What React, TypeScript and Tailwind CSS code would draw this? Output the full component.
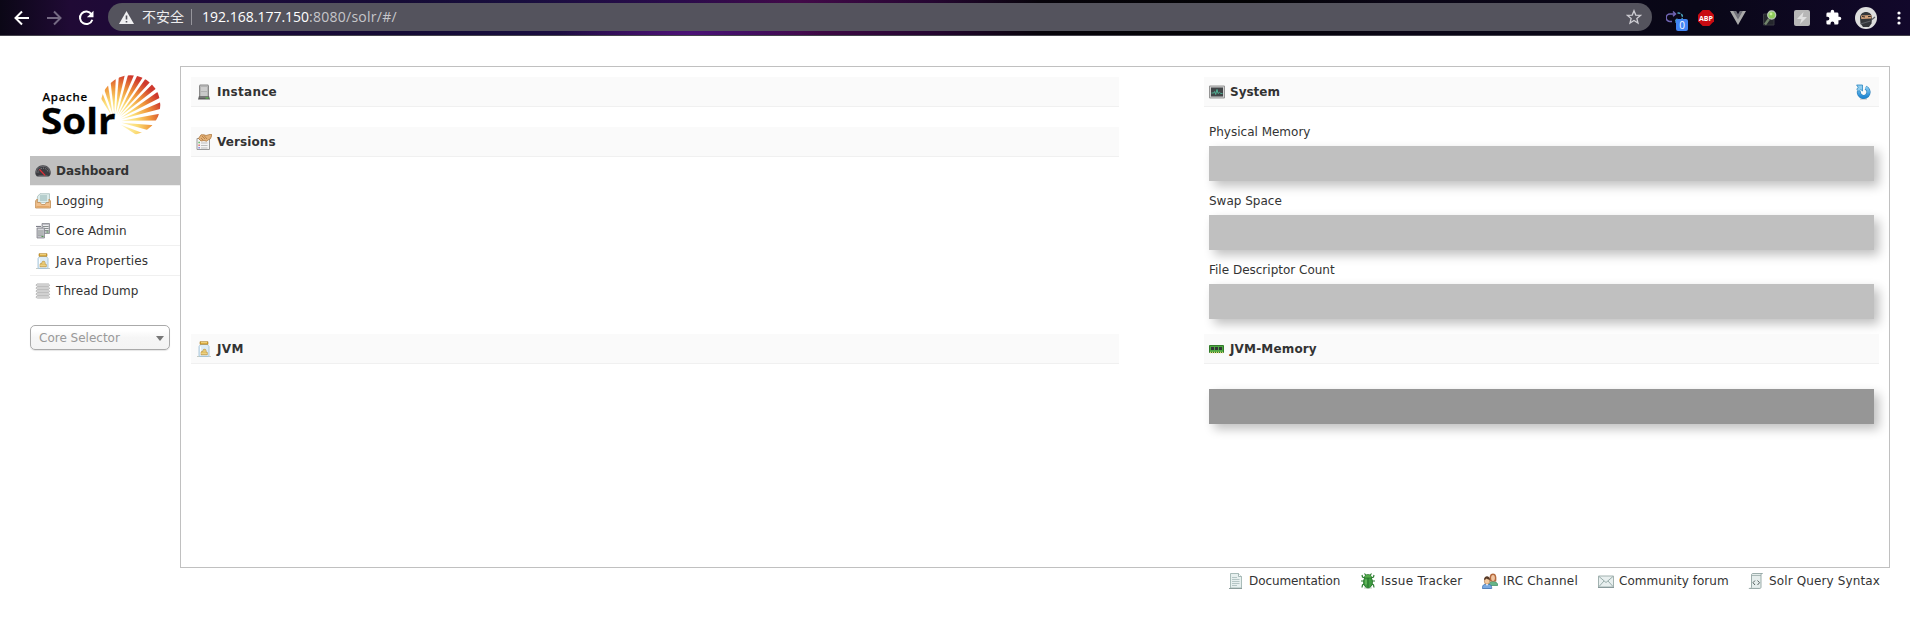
import React from "react";

type IconProps = { className?: string };

const svg16 = (children: React.ReactNode, className = "") => (
  <svg viewBox="0 0 16 16" className={"size-4 shrink-0 " + className}>{children}</svg>
);

/* ---------- page icons ---------- */

const ServerIcon = () => svg16(
  <>
    <path d="M3 1.5 4 .5h8l1 1v11H3z" fill="#8a8a8a" />
    <path d="M4.3 1.5h7.4v11H4.3z" fill="#c9c9c9" />
    <path d="M5 3h6M5 5h6M5 7h6" stroke="#9c9c9c" />
    <path d="M5 4h6M5 6h6" stroke="#e9e9e9" />
    <path d="M2 15.5 3 12h10l1 3.5z" fill="#5d5d5d" />
    <path d="M3.5 13h9" stroke="#929292" />
    <path d="M9.5 14h3" stroke="#4fd03f" />
  </>
);

const VersionsIcon = () => svg16(
  <>
    <path d="M1 4.5h12.5v11H1z" fill="#f4f4f4" stroke="#9a9a9a" />
    <path d="M5 9h6.500M5 11.500h6.500M5 14h6.500" stroke="#bdbdbd" />
    <path d="M2.500 8.500h1.200" stroke="#39a939" strokeWidth="1.400" />
    <path d="M2.500 11.200h1.200" stroke="#d94545" strokeWidth="1.400" />
    <path d="M2.500 13.700h1.200" stroke="#6565d8" strokeWidth="1.400" />
    <path d="M2.500 4.500 5 .8h3l2 .7L14 .4l2 .3-1.500 4L12 6l-1.500 1.200L8 6.500 5 7z" fill="#e3b178" stroke="#a77034" strokeWidth=".7" />
    <path d="m6 2 3 3M8 1.500 11 5M5 4l2 2" stroke="#9c642c" strokeWidth=".6" />
  </>
);

const DashboardIcon = () => svg16(
  <>
    <path d="M.3 10C.3 5.500 3.600 2.300 8 2.300s7.700 3.200 7.700 7.700c0 1.600-1 3.500-2.500 3.500H2.800C1.300 13.500.3 11.600.3 10z" fill="#3d3d42" />
    <path d="M1.300 9.600C1.300 5.800 4.200 3.300 8 3.300s6.700 2.500 6.700 6.300" fill="none" stroke="#77777c" strokeWidth=".8" />
    <path d="M3 9.500a5 4.300 0 0 1 10 0" fill="none" stroke="#a7a7aa" strokeWidth=".9" strokeDasharray="1 1.400" />
    <path d="M3.500 12.500h9" stroke="#5b5b60" />
    <path d="m4.500 6.500 5.700 6" stroke="#e02f38" strokeWidth="1.100" />
  </>
);

const LoggingIcon = () => svg16(
  <>
    <path d="M2.500 3.500 5 .7h9.500v9H2z" fill="#dcebea" stroke="#9db5b3" strokeWidth=".7" />
    <path d="M5 3h7M5 5h7M5 7h7" stroke="#7fa5a5" strokeWidth=".8" />
    <path d="M.6 7.800 2.300 6v3.500h2.900L6.500 11.500h3.600l1.200-2H14V6l1.500 2v7H.6z" fill="#f0c08c" stroke="#bf8d55" strokeWidth=".8" />
    <path d="M1.500 13.700h13" stroke="#e2a566" strokeWidth="1.300" />
  </>
);

const CoreAdminIcon = () => svg16(
  <>
    {[[7, .5], [2, 5]].map(([x, y]) => (
      <g key={x}>
        <path d={`M${x} ${y}h7.500v10h-7.500z`} fill="#c0c1c7" stroke="#85868e" strokeWidth=".8" />
        <path d={`M${x + 1} ${y + 2}h5.500m-5.500 2h5.500m-5.500 2h5.500`} stroke="#ededf0" />
        <path d={`M${x + 1} ${y + 3}h5.500m-5.500 2h5.500m-5.500 2h5.500`} stroke="#7b8480" strokeWidth=".8" />
        <path d={`M${x + 4.5} ${y + 8.5}h2`} stroke="#529851" />
      </g>
    ))}
    <path d="M1 3.500h5" fill="none" stroke="#80818b" strokeWidth="1.200" />
  </>
);

const JarIcon = () => svg16(
  <>
    <path d="M1 15.500h14" stroke="#c5cbc3" />
    <path d="M4.500 3.500 3 5.500v9c0 .7.400 1 1 1h8c.6 0 1-.3 1-1v-9l-1.500-2z" fill="#dcecf7" stroke="#9dbed3" strokeWidth=".8" />
    <path d="M4 .7h8v2.600H4z" fill="#d8a637" stroke="#ad7c21" strokeWidth=".6" />
    <path d="M5 1.700h6" stroke="#f3db8c" />
    <path d="M4.600 5.500v8" stroke="#fff" />
    <path d="M5 13.800v-2.600c0-1 2-1 2-.8V9c0-1 3-1 3 0v2c.6-.2 1.300 0 1.300.6v2.200z" fill="#e1bd5f" stroke="#b78e3b" strokeWidth=".6" />
    <path d="M7 10h3M5 12.300h6" stroke="#f4e1a0" strokeWidth=".7" />
  </>
);

const ThreadIcon = () => svg16(
  <>
    {[1, 4, 7, 10, 13].map((y) => (
      <path key={y} d={`M2 ${y}h11.500c1.300.8 1.300 2 0 2h-11c-1.500 0-1.800-1.200-.5-2z`} fill="#f6f6f6" stroke="#9a9a9a" strokeWidth=".8" />
    ))}
  </>
);

const SystemIcon = () => svg16(
  <>
    <path d="M.5 2h15v12H.5z" fill="#d0d0d0" stroke="#959595" />
    <path d="M2 3.500h12v9H2z" fill="#414547" />
    <path d="M2.500 9h2.200l1-1.500 1 3L8 5.500l1 4 1.500-1.200 1.300 1.200h1.700" fill="none" stroke="#53c8a5" strokeWidth=".8" />
  </>
);

const MemoryIcon = () => svg16(
  <>
    <path d="M.5 4.500h14v7H.5z" fill="#4fa843" stroke="#327c2a" />
    <path d="M2 6h3v3H2zM6 6h3v3H6zM10 6h3v3h-3z" fill="#333638" />
    <path d="M1 11.500h13.500" stroke="#d9d477" strokeWidth="1.500" strokeDasharray="1 1" />
  </>
);

const ReloadIcon = () => (
  <svg viewBox="0 0 16 16" className="size-4 shrink-0">
    <defs>
      <linearGradient id="reload" x1="0" y1="0" x2="0" y2="1">
        <stop offset="0" stopColor="#82c9f1" />
        <stop offset="1" stopColor="#2087d4" />
      </linearGradient>
    </defs>
    <path d="M4 15h7" stroke="#c6c6c6" strokeWidth="1.300" />
    <path d="M3 7A4.800 4.800 0 1 0 9.500 3.700" fill="none" stroke="#2c7fb9" strokeWidth="4.200" />
    <path d="M3 7A4.800 4.800 0 1 0 9.500 3.700" fill="none" stroke="url(#reload)" strokeWidth="3" />
    <path d="M.6 1H6.500v6L4.700 5.500 3 7.500.8 5.200 2.200 3.300z" fill="#8fcdf0" stroke="#2c86bf" strokeWidth=".8" />
  </svg>
);

const DocIcon = () => svg16(
  <>
    <path d="M2.500.5h8l3 3V15h-11z" fill="#e7f0ef" stroke="#a9bcb9" />
    <path d="M10.500.5v3h3" fill="#fff" stroke="#8fa6a3" strokeWidth=".8" />
    <path d="M4 4.500h5M4 6.500h7.500M4 8.500h7.500M4 10.500h7.500M4 12.500h5" stroke="#afc1bf" strokeWidth=".9" />
    <path d="M1 15.500h13" stroke="#8c9d9b" />
  </>
);

const BugIcon = () => svg16(
  <>
    <path d="M4 15h8" stroke="#d1d8d0" strokeWidth="1.300" />
    <path d="M5 5 2.500 4 2 2M11 5l2.500-1 .5-2M5 8H1M11 8h4M5 10.500 2.500 12 2 14.500M11 10.500l2.500 1.500.5 2.500M6 2.500 4.500.5M10 2.500 11.500.5" fill="none" stroke="#2c7d32" strokeWidth="1.200" />
    <ellipse cx="8" cy="9" rx="4.500" ry="6" fill="#3e9c41" stroke="#26732a" strokeWidth=".8" />
    <path d="M4.300 5C4.300 2.500 6 1.500 8 1.500S11.700 2.500 11.700 5z" fill="#55ad4c" stroke="#26732a" strokeWidth=".7" />
    <path d="M8 5v9.500" stroke="#246c2a" strokeWidth=".9" />
    <path d="M6 6.500v5" stroke="#84cb73" />
  </>
);

const PeopleIcon = () => svg16(
  <>
    <path d="M7 12.500c0-3 1.500-4 4-4s4.700 1 4.700 4z" fill="#67b589" stroke="#378b60" strokeWidth=".7" />
    <path d="M7.500 8.500c-.3-5 .3-8 3.500-8s3.800 3.500 3.200 8z" fill="#b4693d" />
    <ellipse cx="11" cy="5" rx="1.900" ry="3" fill="#f0c5a1" />
    <path d="M.4 15.500c0-3.500 1.500-4.500 4.600-4.500s4.700 1 4.700 4.500z" fill="#78a9e1" stroke="#396cae" strokeWidth=".8" />
    <ellipse cx="5" cy="8" rx="2.700" ry="3.300" fill="#f3c99f" stroke="#a87345" strokeWidth=".6" />
    <path d="M2 7c0-5 6-5 6 0-2-.3-3-1-3.500-1.400C4 6.500 3 6.700 2 7z" fill="#563a28" />
    <path d="m4 11 1 2 1-2z" fill="#fff" />
  </>
);

const MailIcon = () => svg16(
  <>
    <path d="M.5 3h15v11H.5z" fill="#e8efef" stroke="#a2b2b0" />
    <path d="m1 3.500 7 6 7-6M1 13.500l5-5.500M15 13.500 10 8" fill="none" stroke="#90a5a3" strokeWidth=".9" />
    <path d="M0 14.500h16" stroke="#89999b" />
  </>
);

const ScriptIcon = () => svg16(
  <>
    <path d="M3.500 14V2c0-1 .5-1.500 1.500-1.500h9.500c-1 0-1.500.5-1.500 1.500v12c0 1-.5 1.500-1.500 1.500H1.500c1.500 0 2-.5 2-1.500z" fill="#e5edec" stroke="#92a5a3" strokeWidth=".9" />
    <path d="M4 2.500h9M.8 15.400h11" stroke="#9aabaa" strokeWidth=".8" />
    <path d="M7 7.500 5 9.700 7 12M9.500 7.500l2 2.200-2 2.300" fill="none" stroke="#596464" />
  </>
);

/* ---------- Solr logo ---------- */

/* each ray: centre angle and half width, in degrees */
const rays: Array<[number, number]> = [
  [-117, 4.500], [-104, 4.300], [-92, 4], [-81, 3.700], [-70.500, 3.500], [-60.500, 3.300], [-51, 3.200],
  [-41.500, 3.300], [-31, 3.600], [-19, 4], [-5.500, 4.500], [10, 5.200], [27, 5.500],
];

function SolrLogo() {
  const ox = 77.5, oy = 49.5;
  const point = (deg: number, r: number) => {
    const a = (deg * Math.PI) / 180;
    return `${ox + r * Math.cos(a)} ${oy + r * Math.sin(a)}`;
  };
  return (
    <svg viewBox="0 0 130 66" className="ml-[7px] h-[66px] w-[130px]">
      <defs>
        <radialGradient id="fan" gradientUnits="userSpaceOnUse" cx={ox - 2} cy={oy + 5} r="62">
          <stop offset="0.150" stopColor="#fff6c0" />
          <stop offset="0.400" stopColor="#fbdc74" />
          <stop offset="0.620" stopColor="#f0983c" />
          <stop offset="0.860" stopColor="#cf392d" />
        </radialGradient>
        <clipPath id="disc"><circle cx="93.500" cy="33" r="29.800" /></clipPath>
      </defs>
      <g clipPath="url(#disc)" fill="url(#fan)">
        {rays.map(([c, w]) => (
          <path key={c} d={`M${point(c, 7)}L${point(c - w, 75)}L${point(c + w, 75)}Z`} />
        ))}
      </g>
      <text x="5.500" y="28.500" className="font-['Noto_Sans','Open_Sans',sans-serif] text-[11.500px] font-medium" textLength="44.500" fill="#000" stroke="#000" strokeWidth=".25">Apache</text>
      <text x="4" y="61.500" className="font-['Open_Sans','Noto_Sans',sans-serif] text-[35.500px] font-bold" textLength="74.500" lengthAdjust="spacingAndGlyphs" fill="#000" stroke="#000" strokeWidth=".3">Solr</text>
    </svg>
  );
}

/* ---------- browser bar ---------- */

const BackArrow = ({ className = "" }: IconProps) => (
  <svg viewBox="0 0 16 16" className={"size-4 shrink-0 " + className}>
    <path d="M15 8H2M8 1.500 1.500 8 8 14.500" fill="none" stroke="currentColor" strokeWidth="2" />
  </svg>
);

function BrowserBar() {
  return (
    <header className="flex h-9 items-center border-b border-[#45434c] bg-[radial-gradient(ellipse_130px_18px_at_690px_34px,#4d1278,transparent),linear-gradient(90deg,#0b0716_0px,#200a35_70px,#1d0a3b_180px,#150b35_400px,#180e3e_520px,#2a0b4b_680px,#420948_800px,#260632_930px,#07040b_1040px,#030305_1250px,#0b0617_1400px,#090717_1700px,#12082b_1910px)] pt-px pl-[14px] font-['Open_Sans','Noto_Sans_CJK_SC',sans-serif] text-sm text-white">
      <BackArrow className="mr-4 -mt-px" />
      <BackArrow className="mr-4 -mt-px rotate-180 text-[#756a83]" />
      <svg viewBox="0 0 16 16" className="-mt-px size-4 shrink-0">
        <path d="M13.500 4.200A6.300 6.300 0 1 0 14.300 9.700" fill="none" stroke="#fff" strokeWidth="2" />
        <path d="M15.500.7v6.600H8.900z" fill="#fff" />
      </svg>
      <div className="-mt-[2px] ml-[14px] flex h-7 w-[1544px] shrink-0 items-center rounded-full bg-[#54535d] pr-[10px] pl-[11px]">
        <svg viewBox="0 0 15 13" className="mr-[8px] h-[13px] w-[15px]">
          <path d="M7.500 0 15 13H0z" fill="#f0f0f2" />
          <path d="M7.500 4.500v4M7.500 10v1.600" stroke="#54535d" strokeWidth="1.600" />
        </svg>
        <span className="w-[42px] text-[#ececee]">不安全</span>
        <span className="mr-[10px] ml-[7px] h-4 w-px bg-[#96959c]" />
        <span className="text-white">192.168.177.150</span>
        <span className="grow tracking-[0.250px] text-[#c6c6ca]">:8080/solr/#/</span>
        <svg viewBox="0 0 16 16" className="size-4">
          <path d="m8 1.700 1.750 4.350 4.700.35-3.600 3.050 1.150 4.600L8 11.500l-4 2.550 1.150-4.600-3.600-3.050 4.700-.35z" fill="none" stroke="#cecdd3" strokeWidth="1.300" />
        </svg>
      </div>
      <div className="-mt-px flex items-center">
        <span className="relative ml-[14px] flex h-7 w-[22px] items-center">
          <svg viewBox="0 0 17 13" className="h-[13px] w-[17px]">
            <path d="M6 10.500H4a3.800 3.800 0 0 1 0-7.600h5M7 .5l2.500 2.400L7 5.300" fill="none" stroke="#7065b4" strokeWidth="1.500" />
            <path d="M11.500 2h1a3.800 3.800 0 0 1 0 8h-3M11.500 7.700 9 10l2.500 2.400" fill="none" stroke="#4ba4bb" strokeWidth="1.400" strokeDasharray="3 1" />
          </svg>
          <span className="absolute top-[15px] left-[10px] flex h-3 w-3 items-center justify-center rounded-[2px] bg-[#4285f4] text-[10px] leading-3">0</span>
        </span>
        <svg viewBox="0 0 16 16" className="ml-[10px] size-4">
          <path d="M4.700 0h6.600L16 4.700v6.600L11.300 16H4.700L0 11.300V4.700z" fill="#c90b12" />
          <text x="8" y="10.600" textAnchor="middle" textLength="14" lengthAdjust="spacingAndGlyphs" className="font-['Open_Sans',sans-serif] text-[7px] font-bold" fill="#fff">ABP</text>
        </svg>
        <svg viewBox="0 0 16 14" className="ml-[16px] h-[14px] w-4">
          <path d="M0 0h4l4 7 4-7h4L8 14z" fill="#aaa" />
          <path d="M3.200 0h3L8 3.200 9.800 0h3L8 8.400z" fill="#71717a" />
        </svg>
        <svg viewBox="0 0 16 16" className="ml-4 size-4">
          <path d="M1.500 4H12v11H1.500z" fill="#25272d" stroke="#393b41" />
          <path d="m7 9-4 5.500" stroke="#71846b" strokeWidth="2.400" />
          <circle cx="9.700" cy="5" r="4" fill="#8dcb59" stroke="#b8c7b4" strokeWidth="1.300" />
          <circle cx="9" cy="4" r="1.400" fill="#c7f09e" />
        </svg>
        <svg viewBox="0 0 16 16" className="ml-4 size-4">
          <rect width="16" height="16" rx="2" fill="#b7b7b7" />
          <path d="M9.500 2 3 9h4.500L6 14l7-7H8.500z" fill="#e0e0e0" />
        </svg>
        <svg viewBox="0 0 24 24" className="ml-[15px] size-[17px]">
          <path d="M20.500 11H19V7a2 2 0 0 0-2-2h-4V3.500a2.500 2.500 0 0 0-5 0V5H4a2 2 0 0 0-2 2v3.800h1.500a2.700 2.700 0 0 1 0 5.400H2V20a2 2 0 0 0 2 2h3.800v-1.500a2.700 2.700 0 0 1 5.400 0V22H17a2 2 0 0 0 2-2v-4h1.500a2.500 2.500 0 0 0 0-5z" fill="#fff" />
        </svg>
        <svg viewBox="0 0 22 22" className="ml-[13px] size-[22px]">
          <circle cx="11" cy="11" r="11" fill="#dedede" />
          <path d="M5 11c0-8 12-8 12 0l-.5 5.500L14 20H8l-2.500-3.500z" fill="#34363a" />
          <path d="M6 8.500 16.500 8v3.500L6.300 12z" fill="#d4a078" />
          <path d="m7 9.500 3 .5m3-.3 3-.5" stroke="#2c2522" />
          <path d="M17 12.500 20 10M5.500 17l10-3" stroke="#5d5f65" strokeWidth="1.300" />
        </svg>
        <svg viewBox="0 0 4 14" className="ml-5 h-[14px] w-1" fill="#fff">
          <circle cx="2" cy="2" r="1.600" /><circle cx="2" cy="7" r="1.600" /><circle cx="2" cy="12" r="1.600" />
        </svg>
      </div>
    </header>
  );
}

/* ---------- dashboard ---------- */

const nav = [
  { label: "Logging", icon: <LoggingIcon />, tracking: "" },
  { label: "Core Admin", icon: <CoreAdminIcon />, tracking: "tracking-[0.080px]" },
  { label: "Java Properties", icon: <JarIcon />, tracking: "tracking-[0.160px]" },
  { label: "Thread Dump", icon: <ThreadIcon />, tracking: "tracking-[0.050px]" },
];

function Sidebar() {
  return (
    <aside className="flex w-[150px] shrink-0 flex-col pt-[6px]">
      <SolrLogo />
      <nav className="mt-[18px]">
        <div className="flex h-[29px] items-center gap-[5px] bg-[#c0c0c0] pl-[5px] font-bold">
          <DashboardIcon />Dashboard
        </div>
        {nav.map((item) => (
          <div key={item.label} className={"flex h-[30px] items-center gap-[5px] border-t border-[#f0f0f0] pl-[5px] " + item.tracking}>
            {item.icon}{item.label}
          </div>
        ))}
      </nav>
      <div className="mt-[20px] flex h-[25px] w-[140px] items-center justify-between rounded-[5px] border border-[#aaa] bg-linear-to-b from-white from-20% via-[#f6f6f6] via-50% to-[#f4f4f4] pr-[5px] pl-2 text-[#999] shadow-[0_1px_1px_rgba(0,0,0,0.1)]">
        Core Selector
        <span className="mt-px border-x-4 border-t-[5px] border-x-transparent border-t-[#777]" />
      </div>
    </aside>
  );
}

type TitleProps = { icon: React.ReactNode; children: string; action?: React.ReactNode; tracking?: string };

function SectionTitle({ icon, children, action, tracking = "" }: TitleProps) {
  return (
    <h2 className="flex h-[30px] shrink-0 items-center gap-[5px] border-b border-[#f0f0f0] bg-[#fafafa] pr-[7px] pl-[5px] font-bold">
      {icon}
      <span className={"grow " + tracking}>{children}</span>
      {action}
    </h2>
  );
}

function Meter({ label }: { label: string }) {
  return (
    <div className="mx-[5px] h-[69px]">
      <p className="h-[24px] leading-[20px]">{label}</p>
      <div className="h-[35px] bg-[#c0c0c0] shadow-[5px_5px_10px_#c0c0c0]" />
    </div>
  );
}

const links = [
  { label: "Documentation", icon: <DocIcon />, style: "w-[132px] tracking-[-0.090px]" },
  { label: "Issue Tracker", icon: <BugIcon />, style: "w-[122px] tracking-[0.260px]" },
  { label: "IRC Channel", icon: <PeopleIcon />, style: "w-[116px] tracking-[0.200px]" },
  { label: "Community forum", icon: <MailIcon />, style: "w-[150px] tracking-[0.040px]" },
  { label: "Solr Query Syntax", icon: <ScriptIcon />, style: "w-[142px] tracking-[0.130px]" },
];

export default function App() {
  return (
    <div className="h-[618px] overflow-hidden bg-white font-['DejaVu_Sans',Verdana,sans-serif] text-xs text-[#333]">
      <BrowserBar />
      <div className="flex pt-[30px] pr-5 pl-[30px]">
        <Sidebar />
        <main className="flex h-[502px] grow justify-between border border-[#c0c0c0] p-[10px]">
          <div className="flex w-[928px] flex-col">
            <SectionTitle icon={<ServerIcon />} tracking="tracking-[0.280px]">Instance</SectionTitle>
            <div className="mt-5 h-[207px]">
              <SectionTitle icon={<VersionsIcon />} tracking="tracking-[0.100px]">Versions</SectionTitle>
            </div>
            <SectionTitle icon={<JarIcon />} tracking="tracking-[0.400px]">JVM</SectionTitle>
          </div>
          <div className="flex w-[675px] flex-col">
            <SectionTitle icon={<SystemIcon />} action={<ReloadIcon />}>System</SectionTitle>
            <div className="h-[227px] pt-[15px]">
              <Meter label="Physical Memory" />
              <Meter label="Swap Space" />
              <Meter label="File Descriptor Count" />
            </div>
            <SectionTitle icon={<MemoryIcon />} tracking="tracking-[0.160px]">JVM-Memory</SectionTitle>
            <div className="mx-[5px] mt-[25px] h-[35px] bg-[#969696] shadow-[5px_5px_10px_#c0c0c0]" />
          </div>
        </main>
      </div>
      <footer className="flex justify-end pt-[5px] pr-[20px]">
        {links.map((l) => (
          <a key={l.label} className={"flex items-center gap-[5px] whitespace-nowrap " + l.style}>
            {l.icon}{l.label}
          </a>
        ))}
      </footer>
    </div>
  );
}
